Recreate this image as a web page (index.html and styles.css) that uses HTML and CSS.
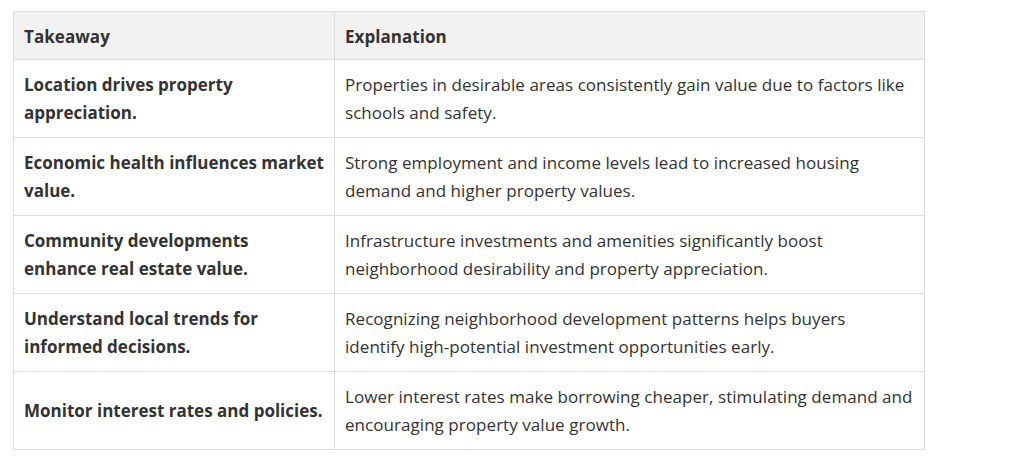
FILE: index.html
```html
<!DOCTYPE html>
<html>
<head>
<meta charset="utf-8">
<link rel="stylesheet" href="styles.css">
</head>
<body>
<table class="takeaways">
  <colgroup>
    <col class="col-a">
    <col class="col-b">
  </colgroup>
  <thead>
    <tr><th>Takeaway</th><th>Explanation</th></tr>
  </thead>
  <tbody>
    <tr><td class="key">Location drives property appreciation.</td><td>Properties in desirable areas consistently gain value due to factors like schools and safety.</td></tr>
    <tr><td class="key">Economic health influences market value.</td><td>Strong employment and income levels lead to increased housing demand and higher property values.</td></tr>
    <tr><td class="key">Community developments enhance real estate value.</td><td>Infrastructure investments and amenities significantly boost neighborhood desirability and property appreciation.</td></tr>
    <tr><td class="key">Understand local trends for informed decisions.</td><td>Recognizing neighborhood development patterns helps buyers identify&nbsp;high-potential investment opportunities early.</td></tr>
    <tr><td class="key">Monitor interest rates and policies.</td><td>Lower interest rates make borrowing cheaper, stimulating demand and encouraging property value growth.</td></tr>
  </tbody>
</table>
</body>
</html>
```
FILE: styles.css
```css
html, body {
  margin: 0;
  padding: 0;
  background: #ffffff;
}
body {
  padding: 11px 0 0 13px;
  font-family: "Open Sans", "Noto Sans", sans-serif;
  color: #333333;
}
.takeaways {
  border-collapse: collapse;
  width: 912px;
  table-layout: fixed;
  font-size: 17px;
  line-height: 28.5px;
}
.col-a { width: 321px; }
.takeaways th,
.takeaways td {
  border: 1px solid #dddddd;
  padding: 10.5px 10px 9.5px;
  text-align: left;
  vertical-align: middle;
  letter-spacing: 0.05px;
}
.takeaways th {
  background: #f2f2f2;
  font-weight: 700;
  padding: 10.5px 10px 8px;
}
.takeaways td.key {
  font-weight: 700;
  letter-spacing: 0;
}
```
